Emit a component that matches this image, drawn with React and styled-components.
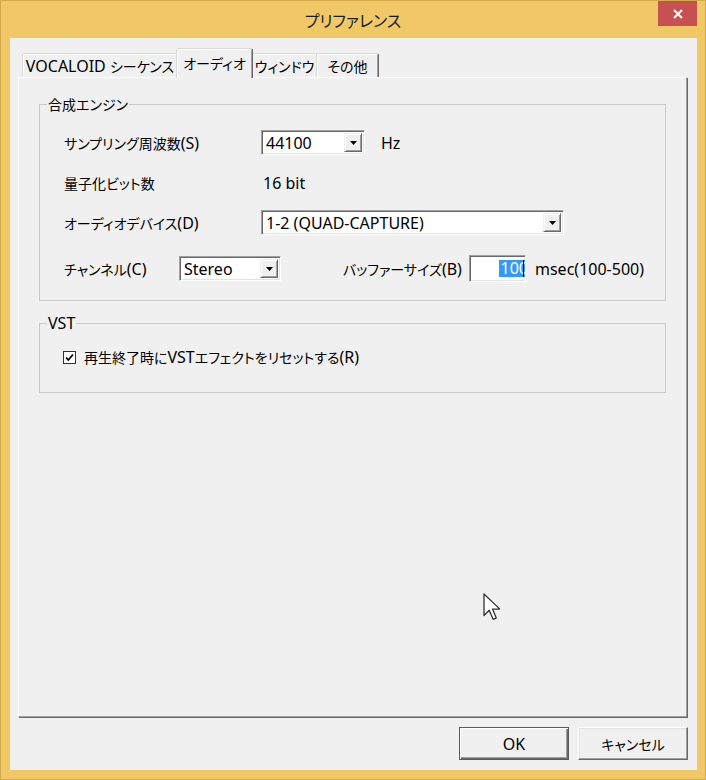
import React from "react";
import styled, { createGlobalStyle, css } from "styled-components";

const GlobalStyle = createGlobalStyle`
  html, body {
    margin: 0;
    padding: 0;
    background: #f0c866;
  }
  body {
    font-family: "Noto Sans", "Noto Sans CJK JP", sans-serif;
    font-size: 16px;
    color: #000;
  }
`;

const JpRun = styled.span`
  font-family: "Noto Sans CJK JP", sans-serif;
  font-size: ${({ size }) => size || 14}px;
  font-feature-settings: "palt";
`;

const CJK = /([\u3000-\u30ff\u3400-\u9fff\uff00-\uffef]+)/;

// mixes latin and japanese runs, the dialog font is larger on latin
const T = ({ children, jp }) => (
  <span>
    {String(children)
      .split(CJK)
      .map((part, i) =>
        i % 2 ? (
          <JpRun key={i} size={jp}>
            {part}
          </JpRun>
        ) : (
          part
        )
      )}
  </span>
);

const Frame = styled.div`
  position: relative;
  box-sizing: border-box;
  width: 706px;
  height: 780px;
  background: #f0c866;
  border: 1px solid #d2aa4c;
  display: flex;
  flex-direction: column;
`;

const TitleBar = styled.div`
  height: 37px;
  flex: none;
  display: grid;
  grid-template-columns: 1fr auto 1fr;
  align-items: center;
`;

const Title = styled.div`
  grid-column: 2;
  color: #1a1a1a;
  line-height: 20px;
  padding-top: 1px;
`;

const CloseButton = styled.div`
  grid-column: 3;
  justify-self: end;
  align-self: start;
  width: 39px;
  height: 25px;
  margin-right: 8px;
  background: #c75050;
  display: flex;
  align-items: center;
  justify-content: center;
`;

const Client = styled.div`
  flex: 1;
  margin: 0 8px 9px 9px;
  background: #f0f0f0;
  display: flex;
  flex-direction: column;
  padding: 11px 10px 10px 8px;
  min-height: 0;
`;

const TabStrip = styled.div`
  display: flex;
  align-items: flex-end;
  padding-left: 5px;
  margin-bottom: -1px;
  position: relative;
  z-index: 1;
`;

const Tab = styled.div`
  box-sizing: border-box;
  width: ${({ w }) => w}px;
  height: 23px;
  margin-bottom: 1px;
  display: flex;
  align-items: center;
  justify-content: center;
  background: #f0f0f0;
  border-top: 1px solid #fff;
  border-left: 1px solid #fff;
  border-right: 1px solid #a0a0a0;
  box-shadow: 0 -1px 0 #d9d9d9, -1px 0 0 #d9d9d9, 1px 0 0 #696969;
  line-height: 18px;
  white-space: nowrap;
  ${({ active }) =>
    active &&
    css`
      height: 29px;
      margin-bottom: 0;
      padding-bottom: 2px;
      position: relative;
      z-index: 2;
    `}
`;

const Panel = styled.div`
  flex: 1;
  box-sizing: border-box;
  background: #f0f0f0;
  border-top: 1px solid #fff;
  border-left: 1px solid #fff;
  border-right: 1px solid #a0a0a0;
  border-bottom: 1px solid #a0a0a0;
  box-shadow: 1px 1px 0 #696969;
  padding: 18px 20px;
  display: flex;
  flex-direction: column;
`;

const Group = styled.fieldset`
  margin: ${({ gap }) => gap || 0}px 0 0 0;
  padding: 0;
  min-width: 0;
  border: 1px solid #c9c9c9;
`;

const Legend = styled.legend`
  margin-left: 7px;
  padding: 0 1px;
  line-height: 16px;
  color: #000;
`;

const GroupBody = styled.div`
  padding: ${({ pad }) => pad};
`;

const Row = styled.div`
  display: flex;
  align-items: center;
  height: ${({ h }) => h || 25}px;
  margin-top: ${({ gap }) => gap || 0}px;
  line-height: 18px;
  white-space: nowrap;
`;

const Label = styled.div`
  width: ${({ w }) => w}px;
  flex: none;
`;

const Value = styled.div`
  padding-left: ${({ pl }) => pl || 0}px;
  margin-left: ${({ ml }) => ml || 0}px;
`;

const sunken = css`
  box-sizing: border-box;
  background: #fff;
  border: 1px solid;
  border-color: #a0a0a0 #fff #fff #a0a0a0;
  box-shadow: inset 1px 1px 0 #696969, inset -1px -1px 0 #e3e3e3;
`;

const ComboBox = styled.div`
  ${sunken};
  width: ${({ w }) => w}px;
  height: 25px;
  flex: none;
  display: flex;
  padding: 2px;
`;

const ComboText = styled.div`
  flex: 1;
  display: flex;
  align-items: center;
  padding-left: 2px;
  overflow: hidden;
`;

const ComboArrow = styled.div`
  box-sizing: border-box;
  width: 18px;
  flex: none;
  background: #f0f0f0;
  border: 1px solid;
  border-color: #f0f0f0 #696969 #696969 #f0f0f0;
  box-shadow: inset 1px 1px 0 #fff, inset -1px -1px 0 #a0a0a0;
  display: flex;
  align-items: center;
  justify-content: center;
`;

const Field = styled.div`
  ${sunken};
  width: 57px;
  height: 27px;
  flex: none;
  display: flex;
  align-items: center;
  justify-content: flex-end;
  padding: 2px;
  overflow: hidden;
`;

const Selection = styled.span`
  background: #3399ff;
  color: #fff;
  line-height: 17px;
  padding-left: 2px;
  margin-right: -5px;
  position: relative;
`;

const Caret = styled.span`
  position: absolute;
  right: 4px;
  top: 0;
  bottom: 0;
  width: 1px;
  background: #000;
`;

const CheckRow = styled.label`
  display: flex;
  align-items: center;
  gap: 8px;
  height: 18px;
  line-height: 18px;
`;

const CheckBox = styled.span`
  box-sizing: border-box;
  width: 13px;
  height: 13px;
  border: 1px solid #333;
  background: #fff;
  display: flex;
  align-items: center;
  justify-content: center;
`;

const Footer = styled.div`
  display: flex;
  justify-content: flex-end;
  gap: 9px;
  margin: 10px -1px 0 0;
`;

const Button = styled.div`
  box-sizing: border-box;
  width: 110px;
  height: 33px;
  display: flex;
  align-items: center;
  justify-content: center;
  background: #f0f0f0;
  border: 1px solid;
  border-color: #fff #696969 #696969 #fff;
  box-shadow: inset -1px -1px 0 #a0a0a0, inset 1px 1px 0 #e3e3e3;
  ${({ primary }) =>
    primary &&
    css`
      border-color: #5a5a5a;
      box-shadow: inset 1px 1px 0 #fff, inset -1px -1px 0 #696969,
        inset -2px -2px 0 #a0a0a0;
    `}
`;

const Pointer = styled.svg`
  position: absolute;
  left: 482px;
  top: 592px;
`;

const DownArrow = () => (
  <svg width="7" height="4" viewBox="0 0 7 4">
    <path d="M0 0h7L3.5 4z" fill="#000" />
  </svg>
);

const Combo = ({ w, children }) => (
  <ComboBox w={w}>
    <ComboText>{children}</ComboText>
    <ComboArrow>
      <DownArrow />
    </ComboArrow>
  </ComboBox>
);

export default function App() {
  return (
    <>
      <GlobalStyle />
      <Frame>
        <TitleBar>
          <Title>
            <T jp={16}>プリファレンス</T>
          </Title>
          <CloseButton>
            <svg width="10" height="10" viewBox="0 0 10 10">
              <path d="M1 1l8 8M9 1l-8 8" stroke="#fff" strokeWidth="2" />
            </svg>
          </CloseButton>
        </TitleBar>

        <Client>
          <TabStrip>
            <Tab w={154}>
              <T>VOCALOID シーケンス</T>
            </Tab>
            <Tab w={75} active>
              <T>オーディオ</T>
            </Tab>
            <Tab w={65}>
              <T>ウィンドウ</T>
            </Tab>
            <Tab w={61}>
              <T>その他</T>
            </Tab>
          </TabStrip>

          <Panel>
            <Group>
              <Legend>
                <T>合成エンジン</T>
              </Legend>
              <GroupBody pad="18px 0 18px 24px">
                <Row>
                  <Label w={197}>
                    <T>サンプリング周波数(S)</T>
                  </Label>
                  <Combo w={104}>44100</Combo>
                  <Value ml={16}>Hz</Value>
                </Row>
                <Row gap={16} h={24}>
                  <Label w={197}>
                    <T>量子化ビット数</T>
                  </Label>
                  <Value pl={2}>16 bit</Value>
                </Row>
                <Row gap={15}>
                  <Label w={197}>
                    <T>オーディオデバイス(D)</T>
                  </Label>
                  <Combo w={303}>1-2 (QUAD-CAPTURE)</Combo>
                </Row>
                <Row gap={20} h={27}>
                  <Label w={115}>
                    <T>チャンネル(C)</T>
                  </Label>
                  <Combo w={102}>Stereo</Combo>
                  <Value ml={62}>
                    <Label w={126}>
                      <T>バッファーサイズ(B)</T>
                    </Label>
                  </Value>
                  <Field>
                    <Selection>
                      100
                      <Caret />
                    </Selection>
                  </Field>
                  <Value ml={9}>msec(100-500)</Value>
                </Row>
              </GroupBody>
            </Group>

            <Group gap={14}>
              <Legend>VST</Legend>
              <GroupBody pad="17px 0 26px 23px">
                <CheckRow>
                  <CheckBox>
                    <svg width="9" height="9" viewBox="0 0 9 9">
                      <path
                        d="M1 4.5l2.3 2.5L8 1.5"
                        fill="none"
                        stroke="#000"
                        strokeWidth="1.8"
                      />
                    </svg>
                  </CheckBox>
                  <T>再生終了時にVSTエフェクトをリセットする(R)</T>
                </CheckRow>
              </GroupBody>
            </Group>
          </Panel>

          <Footer>
            <Button primary>OK</Button>
            <Button>
              <T>キャンセル</T>
            </Button>
          </Footer>
        </Client>

        <Pointer width="17" height="27" viewBox="0 0 17 27">
          <path
            d="M1 1v21.5l5.2-5.2 3.9 9 3.2-1.4-3.8-8.8h7.3z"
            fill="#fff"
            stroke="#333"
            strokeWidth="1.3"
            strokeLinejoin="round"
          />
        </Pointer>
      </Frame>
    </>
  );
}
